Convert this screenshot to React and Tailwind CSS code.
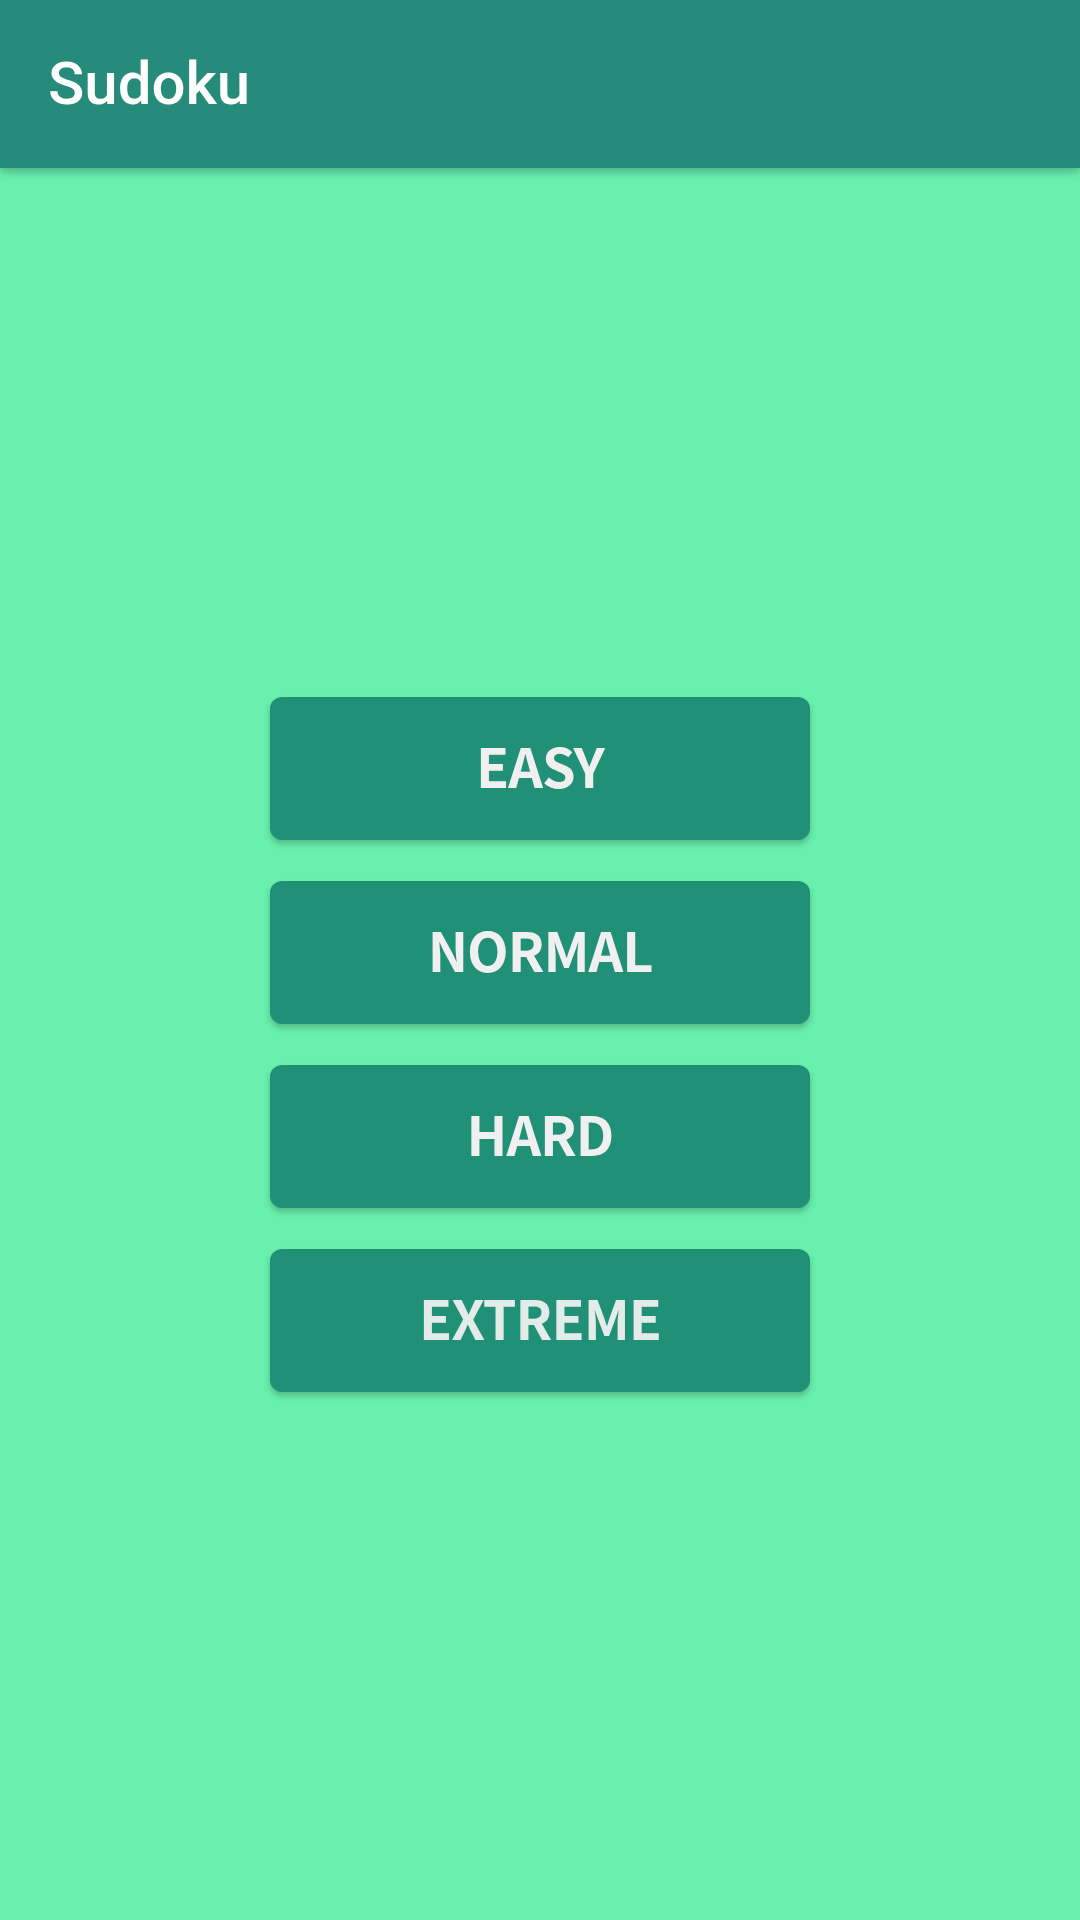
import React from 'react'

const LEVELS = [
  { label: 'EASY', color: 'text-[#f0f0f0]' },
  { label: 'NORMAL', color: 'text-[#f0f0f0]' },
  { label: 'HARD', color: 'text-[#f0f0f0]' },
  { label: 'EXTREME', color: 'text-[#e4ecea]' },
]

export default function App() {
  return (
    <div className="flex h-[1920px] w-[1080px] flex-col bg-[#69f0ae]">
      <header className="relative z-10 flex h-[168px] shrink-0 items-center bg-[#268b7a] pl-[48px] shadow-[0_4px_8px_rgba(0,0,0,0.25)]">
        <h1 className="font-['Roboto',sans-serif] text-[60px] font-medium text-white">Sudoku</h1>
      </header>

      <main className="flex flex-1 flex-col items-center justify-center gap-[41px]">
        {LEVELS.map((l) => (
          <button
            key={l.label}
            className={`flex h-[143px] w-[540px] items-center justify-center rounded-[12px] bg-[#209177] pb-[6px] font-['Noto_Sans_CJK_JP',sans-serif] text-[54px] leading-none font-bold tracking-[-1px] shadow-[0_4px_6px_rgba(0,0,0,0.22)] ${l.color}`}
          >
            {l.label}
          </button>
        ))}
      </main>
    </div>
  )
}
